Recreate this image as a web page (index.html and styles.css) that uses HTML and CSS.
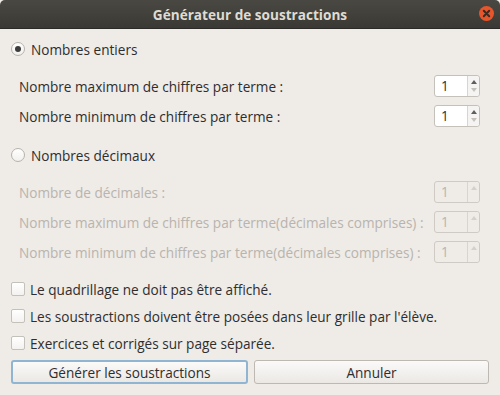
FILE: index.html
```html
<!DOCTYPE html>
<html lang="fr">
  <head>
    <meta charset="UTF-8" />
    <title>Générateur de soustractions</title>
    <link rel="stylesheet" href="styles.css">
  </head>
  <body>
    <div class="window">
      <div class="titlebar">
        <span class="title">Générateur de soustractions</span>
        <span class="close">
          <svg width="15" height="15" viewBox="0 0 15 15">
            <circle cx="7.5" cy="7.5" r="7.5" fill="#e8552b" />
            <path d="M4.8 4.8 L10.2 10.2 M10.2 4.8 L4.8 10.2" stroke="#3a2a22" stroke-width="2" stroke-linecap="round" />
          </svg>
        </span>
      </div>

      <div class="content">
        <label class="option">
          <span class="radio checked"></span>
          Nombres entiers
        </label>
        <div class="group">
          <div class="row">
            <span>Nombre maximum de chiffres par terme :</span>
            <span class="spin"><span class="value">1</span><span class="arrows"><i class="up"></i><i class="down"></i></span></span>
          </div>
          <div class="row">
            <span>Nombre minimum de chiffres par terme :</span>
            <span class="spin"><span class="value">1</span><span class="arrows"><i class="up"></i><i class="down"></i></span></span>
          </div>
        </div>

        <label class="option">
          <span class="radio"></span>
          Nombres décimaux
        </label>
        <div class="group disabled">
          <div class="row">
            <span>Nombre de décimales :</span>
            <span class="spin"><span class="value">1</span><span class="arrows"><i class="up"></i><i class="down"></i></span></span>
          </div>
          <div class="row">
            <span>Nombre maximum de chiffres par terme(décimales comprises) :</span>
            <span class="spin"><span class="value">1</span><span class="arrows"><i class="up"></i><i class="down"></i></span></span>
          </div>
          <div class="row">
            <span>Nombre minimum de chiffres par terme(décimales comprises) :</span>
            <span class="spin"><span class="value">1</span><span class="arrows"><i class="up"></i><i class="down"></i></span></span>
          </div>
        </div>

        <div class="checks">
          <label class="check"><span class="box"></span>Le quadrillage ne doit pas être affiché.</label>
          <label class="check"><span class="box"></span>Les soustractions doivent être posées dans leur grille par l'élève.</label>
          <label class="check"><span class="box"></span>Exercices et corrigés sur page séparée.</label>
        </div>

        <div class="buttons">
          <button class="default">Générer les soustractions</button>
          <button>Annuler</button>
        </div>
      </div>
    </div>
  </body>
</html>
```

FILE: styles.css
```css
body {
  margin: 0;
  background-color: #efebe7;
  font-family: "Open Sans", "Noto Sans", sans-serif;
  font-size: 13.6px;
  color: #2e2e2e;
}

.window {
  width: 500px;
  height: 395px;
  display: flex;
  flex-direction: column;
}

.titlebar {
  height: 28px;
  background: linear-gradient(#4a4843, #3a3935);
  border-bottom: 1px solid #2b2a27;
  display: flex;
  align-items: center;
  justify-content: center;
  position: relative;
  border-radius: 5px 5px 0 0;
}

.title {
  color: #dfdbd2;
  font-weight: bold;
  font-size: 13.6px;
}

.close {
  position: absolute;
  right: 6px;
  top: 6px;
  display: flex;
}

.content {
  padding: 8px 11px 0 11px;
  display: flex;
  flex-direction: column;
}

.option {
  display: flex;
  align-items: center;
  gap: 6px;
  height: 24px;
  font-size: 13.6px;
}

.radio {
  width: 12px;
  height: 12px;
  border: 1px solid #b6b2ac;
  border-radius: 50%;
  background: linear-gradient(#ffffff, #f2f0ed);
  display: flex;
  align-items: center;
  justify-content: center;
}

.radio.checked::after {
  content: "";
  width: 6px;
  height: 6px;
  border-radius: 50%;
  background-color: #3c3c3c;
}

.group {
  padding: 14px 0 16px 8px;
  display: flex;
  flex-direction: column;
  gap: 8px;
}

.group.disabled {
  padding-top: 14px;
  padding-bottom: 15px;
}

.row {
  display: flex;
  align-items: center;
  justify-content: space-between;
  height: 22px;
}

.spin {
  display: flex;
  width: 44px;
  height: 20px;
  border: 1px solid #c4c0ba;
  border-radius: 3px;
  background-color: #ffffff;
  margin-right: 9px;
}

.value {
  flex: 1;
  padding-left: 6px;
  line-height: 20px;
}

.arrows {
  width: 11px;
  border-left: 1px solid #d8d4cf;
  background-color: #f6f4f2;
  border-radius: 0 3px 3px 0;
  display: flex;
  flex-direction: column;
  align-items: center;
  justify-content: center;
  gap: 4px;
}

.arrows i {
  width: 0;
  height: 0;
  border-left: 3.5px solid transparent;
  border-right: 3.5px solid transparent;
}

.arrows .up {
  border-bottom: 4px solid #5e5e5e;
}

.arrows .down {
  border-top: 4px solid #c4c0ba;
}

.disabled .row,
.disabled .value {
  color: #b8b4ae;
}

.disabled .spin {
  background-color: #efebe7;
  border-color: #cfcac4;
}

.disabled .arrows {
  background-color: #efebe7;
  justify-content: flex-start;
  padding-top: 4px;
}

.disabled .arrows .up {
  border-bottom-color: #d4d0ca;
}

.disabled .arrows .down {
  display: none;
}

.checks {
  display: flex;
  flex-direction: column;
  gap: 7px;
  margin-top: 1px;
}

.check {
  display: flex;
  align-items: center;
  gap: 5px;
  height: 20px;
}

.box {
  width: 12px;
  height: 12px;
  border: 1px solid #c4c0ba;
  border-radius: 2px;
  background: linear-gradient(#ffffff, #f4f2ef);
}

.buttons {
  display: flex;
  gap: 6px;
  margin-top: 7px;
}

button {
  flex: 1;
  height: 24px;
  font-family: inherit;
  font-size: 13.6px;
  color: #2e2e2e;
  border: 1px solid #bdb8b2;
  border-radius: 3px;
  background: linear-gradient(#fbfaf9, #ebe8e4);
}

button.default {
  border: 2px solid #8fb5d3;
}
```
